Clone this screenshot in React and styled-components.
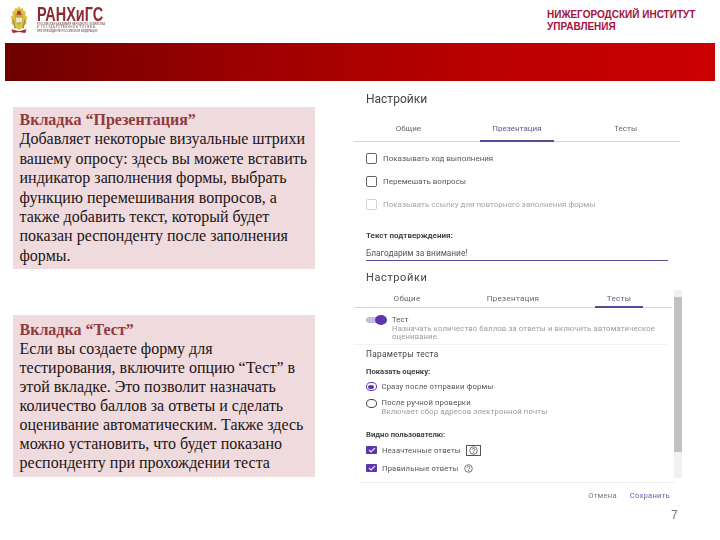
import React from 'react';
import styled, { createGlobalStyle } from 'styled-components';

const Global = createGlobalStyle`
  html, body { margin: 0; padding: 0; background: #fff; }
  body { width: 720px; height: 540px; overflow: hidden; font-family: "Liberation Sans", sans-serif; }
`;
const Page = styled.div`
  position: relative; width: 720px; height: 540px; display: flex; flex-direction: column;
`;
const Header = styled.header`
  height: 43px; display: flex; justify-content: space-between; padding: 5px 0 0 9px; box-sizing: border-box;
`;
const Logo = styled.div`display: flex; gap: 8px; height: 30px; filter: blur(.35px);`;
const LogoText = styled.div`display: flex; flex-direction: column; width: 64px;`;
const LogoName = styled.div`
  font: 700 19.5px/18px "Liberation Sans", sans-serif; color: #8c2a31; white-space: nowrap;
  transform: scaleX(.74); transform-origin: left; height: 18px;
`;
const LogoSub = styled.div`
  font: 700 2.6px/3.4px "Liberation Sans", sans-serif; color: #8f6e70; white-space: nowrap;
`;
const SubLine = styled.span`display: block; letter-spacing: ${p => p.$sp || 0}px;`;
const Institute = styled.div`
  width: 173px; font: 700 10px/12px "Liberation Sans", sans-serif; color: #a5123f; padding-top: 4px;
`;
const Band = styled.div`
  margin: 0 5px; height: 38px; background: linear-gradient(90deg, #6e0000 0%, #9c0000 33%, #ba0000 67%, #cc0000 100%);
`;
const Main = styled.main`
  flex: 1; display: grid; grid-template-columns: 302px 345px; column-gap: 39.5px; padding: 0 0 0 12.5px;
`;
const Notes = styled.div`display: flex; flex-direction: column; gap: 46px; padding-top: 26px;`;
const Note = styled.section`
  background: #efdbdd; padding: ${p => p.$pt}px 0 0 7px; height: 162px; box-sizing: border-box;
  font: 400 16px/${p => p.$lh}px "Liberation Serif", serif; color: #1c1416; white-space: nowrap;
`;
const NoteTitle = styled.div`font-weight: 700; color: #8f3a40;`;
const Shots = styled.div`filter: blur(.4px); padding-top: 8px; color: #5f6368; font-family: Roboto, sans-serif;`;
const Panel = styled.div`position: relative; width: 328px; height: ${p => p.$h}px;`;
const Title = styled.div`
  font-size: ${p => p.$size}px; line-height: ${p => p.$lh}px; color: #444; padding-left: 12px; letter-spacing: ${p => p.$sp || 0}px;
`;
const Tabs = styled.div`
  display: grid; grid-template-columns: 1fr 1fr 1fr; border-bottom: 1px solid #d5d5d5; margin-top: ${p => p.$mt}px; width: ${p => p.$w}px;
`;
const Tab = styled.div`
  text-align: center; font-size: 8px; line-height: 12px; height: ${p => p.$hh}px; color: ${p => p.$on ? '#5e5a85' : '#666'};
  letter-spacing: ${p => p.$sp || 0}px; position: relative;
  &::after { content: ''; display: ${p => p.$on ? 'block' : 'none'}; position: absolute; left: 50%; transform: translateX(-50%);
    bottom: -1px; width: ${p => p.$w}px; height: 2px; background: #5b4a96; }
`;
const CheckRow = styled.div`
  display: flex; align-items: center; gap: 6px; padding-left: 12px; height: 11px; margin-top: ${p => p.$mt}px;
  font-size: 8px; color: ${p => p.$off ? '#a5a5a5' : '#5a5a5a'};
`;
const Box = styled.span`
  width: 9px; height: 9px; border: 1.3px solid ${p => p.$off ? '#d3d3d3' : '#666'}; border-radius: 2px; flex: none;
`;
const BoldLabel = styled.div`
  font-size: ${p => p.$s}px; font-weight: 700; color: #444; padding-left: 12px; line-height: 10px; margin-top: ${p => p.$mt}px;
`;
const InputLine = styled.div`
  margin: 7px 0 0 12px; width: 302px; height: 12px; border-bottom: 1.4px solid #5b4a96; font-size: 8.3px; line-height: 11px; color: #555;
`;
const ToggleRow = styled.div`display: flex; gap: 8px; padding: 8px 0 0 12px; height: 28px; border-bottom: 1px solid #f2f2f2; width: 302px;`;
const Toggle = styled.span`
  position: relative; width: 18px; height: 6px; margin-top: 1px; background: #c6bbe4; border-radius: 3px; flex: none;
  &::after { content: ''; position: absolute; right: -3px; top: -2px; width: 12px; height: 10px; border-radius: 50%; background: #5e35b1; }
`;
const Stack = styled.div`font-size: 7.7px; line-height: 8.6px; letter-spacing: .15px; color: #9a9a9a; white-space: nowrap;`;
const Dark = styled.div`color: #555;`;
const OptRow = styled.div`
  display: flex; align-items: ${p => p.$top ? 'flex-start' : 'center'}; gap: 5px; padding-left: 12px; margin-top: ${p => p.$mt}px;
  font-size: 7.7px; letter-spacing: .15px; color: #555; line-height: 9px; white-space: nowrap;
`;
const Radio = styled.span`
  width: 8.5px; height: 6.5px; border-radius: 50%; flex: none; border: 1.3px solid ${p => p.$on ? '#5e35b1' : '#444'};
  display: flex; align-items: center; justify-content: center;
  &::after { content: ''; display: ${p => p.$on ? 'block' : 'none'}; width: 6px; height: 4px; border-radius: 50%; background: #5e35b1; }
`;
const Checked = styled.span`
  width: 11px; height: 8px; background: #5e35b1; border-radius: 1px; flex: none; display: flex; align-items: center; justify-content: center;
`;
const HelpIcon = styled.span`
  display: inline-flex; align-items: center; justify-content: center;
  ${p => p.$frame ? 'border: 1px solid #555; padding: 0 1px;' : ''}
`;
const Scrollbar = styled.div`
  position: absolute; left: 320px; top: 22px; width: 8px; height: 188px; background: #f1f1f1;
  &::after { content: ''; position: absolute; left: 0; top: 7px; width: 8px; height: 155px; background: #c1c1c1; }
`;
const Footer = styled.div`
  border-top: 1px solid #eee; margin: ${p => p.$mt}px 0 0 6px; width: 315px; height: 25px; padding-right: 5px; box-sizing: border-box;
  display: flex; justify-content: flex-end; align-items: center; gap: 13px; font-size: 7.7px; letter-spacing: .2px; color: #7a7a7a;
`;
const Save = styled.span`color: #6f5fae;`;
const PageNo = styled.div`
  position: absolute; left: 671px; top: 507px; font: 400 12px/16px "Liberation Sans", sans-serif; color: #777;
`;

const Help = () => (
  <svg width="11" height="9" viewBox="0 0 11 9" fill="none" stroke="#555" strokeWidth=".8">
    <circle cx="5.5" cy="4.5" r="3.8" />
    <path d="M4.2 3.6c0-1.7 2.7-1.7 2.7 0 0 1-1.3 1-1.3 2" />
    <circle cx="5.6" cy="6.8" r=".3" />
  </svg>
);
const Tick = () => (
  <svg width="8" height="6" viewBox="0 0 8 6" fill="none" stroke="#e8e0f7" strokeWidth="1.1"><path d="M1 3l2 2 4-4" /></svg>
);
const Crest = () => (
  <svg width="20" height="30" viewBox="0 0 26 31" preserveAspectRatio="none">
    <path d="M13 1l2 3 3-1 1 3 3 1-1 3 3 3-2 3 1 3-3 2-1 3-3 0-3 2-3-2-3 0-1-3-3-2 1-3-2-3 3-3-1-3 3-1 1-3 3 1z" fill="#e0c040" />
    <path d="M8 9h10v8l-5 4-5-4z" fill="#c4a53a" />
    <path d="M11 6h4l1 4h-6z" fill="#a83a30" />
    <path d="M9 13h8v5H9z" fill="#e9e4d2" />
    <path d="M5 15l3 9M21 15l-3 9" stroke="#8a8f5a" strokeWidth="1.6" />
    <path d="M3 25l10 2 10-2-2 4-8-1-8 1z" fill="#a8262c" />
  </svg>
);

export default function App() {
  return (
    <Page>
      <Global />
      <Header>
        <Logo>
          <Crest />
          <LogoText>
            <LogoName>РАНХиГС</LogoName>
            <LogoSub>
              <SubLine>РОССИЙСКАЯ АКАДЕМИЯ НАРОДНОГО ХОЗЯЙСТВА</SubLine>
              <SubLine $sp={.7}>И ГОСУДАРСТВЕННОЙ СЛУЖБЫ</SubLine>
              <SubLine>ПРИ ПРЕЗИДЕНТЕ РОССИЙСКОЙ ФЕДЕРАЦИИ</SubLine>
            </LogoSub>
          </LogoText>
        </Logo>
        <Institute>НИЖЕГОРОДСКИЙ ИНСТИТУТ<br />УПРАВЛЕНИЯ</Institute>
      </Header>
      <Band />
      <Main>
        <Notes>
          <Note $pt={3} $lh={19.4}>
            <NoteTitle>Вкладка “Презентация”</NoteTitle>
            Добавляет некоторые визуальные штрихи<br />
            вашему опросу: здесь вы можете вставить<br />
            индикатор заполнения формы, выбрать<br />
            функцию перемешивания вопросов, а<br />
            также добавить текст, который будет<br />
            показан респонденту после заполнения<br />
            формы.
          </Note>
          <Note $pt={5} $lh={19}>
            <NoteTitle>Вкладка “Тест”</NoteTitle>
            Если вы создаете форму для<br />
            тестирования, включите опцию “Тест” в<br />
            этой вкладке. Это позволит назначать<br />
            количество баллов за ответы и сделать<br />
            оценивание автоматическим. Также здесь<br />
            можно установить, что будет показано<br />
            респонденту при прохождении теста
          </Note>
        </Notes>
        <Shots>
          <Panel $h={179}>
            <Title $size={12} $lh={20}>Настройки</Title>
            <Tabs $mt={14} $w={326}>
              <Tab $hh={18}>Общие</Tab>
              <Tab $hh={18} $on $w={74}>Презентация</Tab>
              <Tab $hh={18}>Тесты</Tab>
            </Tabs>
            <CheckRow $mt={11}><Box />Показывать ход выполнения</CheckRow>
            <CheckRow $mt={12}><Box />Перемешать вопросы</CheckRow>
            <CheckRow $mt={12} $off><Box $off />Показывать ссылку для повторного заполнения формы</CheckRow>
            <BoldLabel $mt={21} $s={8}>Текст подтверждения:</BoldLabel>
            <InputLine>Благодарим за внимание!</InputLine>
          </Panel>
          <Panel $h={240}>
            <Title $size={11} $lh={20} $sp={.6}>Настройки</Title>
            <Tabs $mt={5} $w={318}>
              <Tab $hh={14} $sp={.3}>Общие</Tab>
              <Tab $hh={14} $sp={.3}>Презентация</Tab>
              <Tab $hh={14} $sp={.3} $on $w={48}>Тесты</Tab>
            </Tabs>
            <ToggleRow>
              <Toggle />
              <Stack>
                <Dark>Тест</Dark>
                Назначать количество баллов за ответы и включить автоматическое<br />оценивание.
              </Stack>
            </ToggleRow>
            <Title $size={8.3} $lh={18} $sp={.3}>Параметры теста</Title>
            <BoldLabel $mt={4} $s={7.7}>Показать оценку:</BoldLabel>
            <OptRow $mt={5}><Radio $on />Сразу после отправки формы</OptRow>
            <OptRow $mt={8} $top><Radio /><Stack><Dark>После ручной проверки</Dark>Включает сбор адресов электронной почты</Stack></OptRow>
            <BoldLabel $mt={14} $s={7.7}>Видно пользователю:</BoldLabel>
            <OptRow $mt={4.5}><Checked><Tick /></Checked>Незачтенные ответы<HelpIcon $frame><Help /></HelpIcon></OptRow>
            <OptRow $mt={8}><Checked><Tick /></Checked>Правильные ответы<HelpIcon><Help /></HelpIcon></OptRow>
            <Scrollbar />
            <Footer $mt={9.5}>Отмена<Save>Сохранить</Save></Footer>
          </Panel>
        </Shots>
      </Main>
      <PageNo>7</PageNo>
    </Page>
  );
}
